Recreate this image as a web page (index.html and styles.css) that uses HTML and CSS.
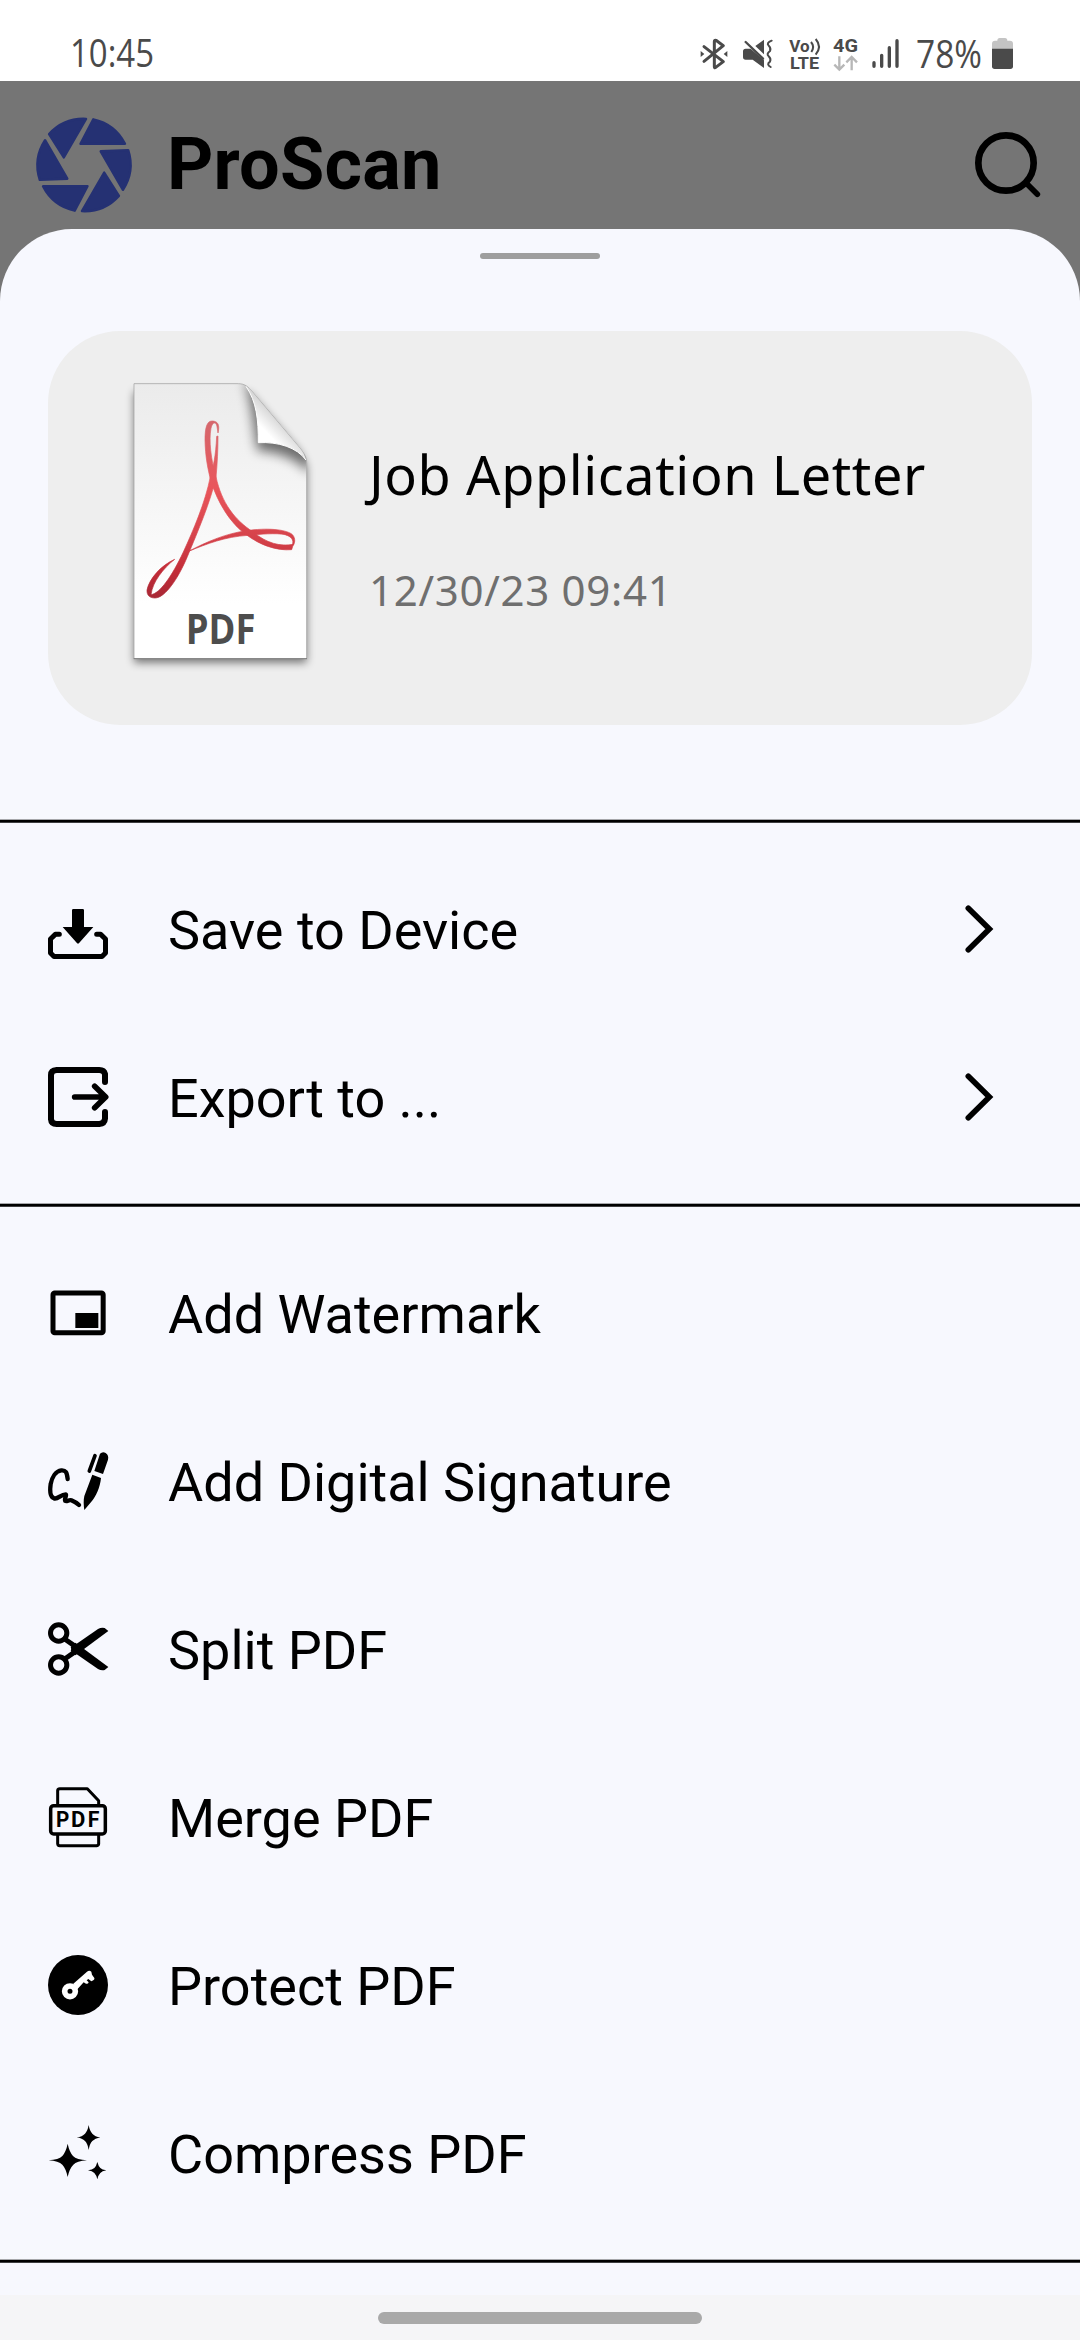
FILE: index.html
```html
<!DOCTYPE html>
<html lang="en">
<head>
<meta charset="utf-8">
<title>ProScan</title>
<link rel="stylesheet" href="styles.css">
</head>
<body>
<div class="phone">
  <div class="status">
    <svg class="clock" viewBox="0 0 88 56"><text x="1" y="41" textLength="84" lengthAdjust="spacingAndGlyphs">10:45</text></svg>
    <div class="indicators">
      <svg class="bluetooth" viewBox="120 108 84 105"><g fill="none" stroke="#4a4a4a" stroke-width="9" stroke-linejoin="round" stroke-linecap="round"><path d="M132 137L190 182L166 200Q163 201 163 196V122Q163 116 168 118L190 134L132 181"/></g><path d="M122 150L133 159L122 168ZM202 150L191 159L202 168Z" fill="#4a4a4a"/></svg>
      <svg class="mute" viewBox="246 108 96 105"><path fill="#4a4a4a" d="M286 135L312 116V160ZM257 143H272L312 178V201L278 176H257Q249 176 249 168V151Q249 143 257 143Z"/><g fill="none" stroke="#4a4a4a" stroke-linecap="round"><path stroke-width="7" d="M257 123L309 173"/><path stroke-width="6" d="M335 119Q318 126 326 134T330 150Q318 159 326 166T330 182Q318 190 332 198"/></g></svg>
      <svg class="volte" viewBox="387 93 96 135"><text x="388" y="152" textLength="61" lengthAdjust="spacingAndGlyphs">Vo</text><text x="390" y="204" textLength="87" lengthAdjust="spacingAndGlyphs">LTE</text><path fill="none" stroke="#4a4a4a" stroke-width="6" d="M453 123Q465 137 454 153M467 114Q487 137 467 161"/></svg>
      <svg class="network" viewBox="516 93 81 135"><text x="519" y="152" textLength="75" lengthAdjust="spacingAndGlyphs">4G</text><path fill="none" stroke="#b7b7b7" stroke-width="7" d="M538 166V205M523 191L538 206L553 191M575 208V170M559 184L575 168L591 184"/></svg>
      <svg class="signal" viewBox="633 108 87 105"><path stroke="#4a4a4a" stroke-width="10" stroke-linecap="round" d="M642 185V196M665 163V196M688 140V196M711 119V196"/></svg>
      <svg class="percent" viewBox="0 0 68 56"><text x="1" y="42" textLength="66" lengthAdjust="spacingAndGlyphs">78%</text></svg>
      <svg class="battery" viewBox="993 108 69 105"><path fill="#c4c4c4" d="M1012 119Q1012 111 1019 111H1035Q1042 111 1042 119H1050Q1059 119 1059 128V145H996V128Q996 119 1005 119Z"/><path fill="#4a4a4a" d="M996 143H1059V196Q1059 204 1051 204H1004Q996 204 996 196Z"/></svg>
    </div>
  </div>

  <header class="header">
    <svg class="logo" viewBox="-48 -48 96 96">
      <defs><path id="blade" d="M9.3 -45.7A46.7 46.7 0 0 1 41 -21.3L-3.5 -21.3Z"/></defs>
      <g fill="#253173" stroke="#253173" stroke-width="2.4" stroke-linejoin="round">
        <use href="#blade"/><use href="#blade" transform="rotate(60)"/><use href="#blade" transform="rotate(120)"/>
        <use href="#blade" transform="rotate(180)"/><use href="#blade" transform="rotate(240)"/><use href="#blade" transform="rotate(300)"/>
      </g>
    </svg>
    <h1 class="title">ProScan</h1>
    <svg class="search" viewBox="942 390 204 210"><g fill="none" stroke="#000" stroke-linecap="round"><circle cx="1038" cy="489" r="83" stroke-width="20"/><path stroke-width="17" d="M1099 550L1132 583"/></g></svg>
  </header>

  <main class="sheet">
    <div class="handle"></div>
    <section class="card">
      <svg class="file" viewBox="0 0 690 990">
        <defs>
          <linearGradient id="paper" x1="0" y1="0" x2="0" y2="1"><stop offset="0" stop-color="#ebebeb"/><stop offset=".4" stop-color="#f5f5f5"/><stop offset=".8" stop-color="#fff"/></linearGradient>
          <linearGradient id="ink" gradientUnits="userSpaceOnUse" x1="0" y1="183" x2="0" y2="714"><stop offset="0" stop-color="#d5686d"/><stop offset=".38" stop-color="#e9555b"/><stop offset=".65" stop-color="#d6434b"/><stop offset=".85" stop-color="#c22c38"/><stop offset="1" stop-color="#a82835"/></linearGradient>
          <linearGradient id="flap" gradientUnits="userSpaceOnUse" x1="445" y1="248" x2="515" y2="180"><stop offset="0" stop-color="#fff"/><stop offset=".4" stop-color="#fff"/><stop offset="1" stop-color="#d2d2d2"/></linearGradient>
          <filter id="soft" x="-20%" y="-20%" width="140%" height="140%"><feGaussianBlur stdDeviation="13"/></filter>
          <filter id="fold" x="-40%" y="-40%" width="180%" height="180%"><feGaussianBlur stdDeviation="17"/></filter>
          <clipPath id="edge"><path d="M72 71H385C405 71 416 82 425 93L570 265C583 281 590 292 590 310V896H72Z"/></clipPath>
        </defs>
        <path d="M72 95H385L420 100L570 275L590 318V908H72Z" fill="#000" opacity=".5" filter="url(#soft)"/>
        <path d="M72 71H385C405 71 416 82 425 93L570 265C583 281 590 292 590 310V896H72Z" fill="url(#paper)"/>
        <g clip-path="url(#edge)"><path d="M402 60C425 120 430 200 442 272C500 274 560 295 600 340L610 200Z" fill="#000" opacity=".55" filter="url(#fold)"/></g>
        <path d="M72 896V71H385C405 71 416 82 425 93L570 265C583 281 590 292 590 310V896" fill="none" stroke="#a9a9a9" stroke-width="2.5"/>
        <path d="M71 896H591" stroke="#777" stroke-width="3"/>
        <path d="M408 79C440 125 445 180 445 248C505 245 560 262 588 300C584 284 578 275 570 265L425 93Q416 83 408 79Z" fill="url(#flap)"/>
        <path d="M408 79C440 125 445 180 445 248C505 245 560 262 588 300" fill="none" stroke="#fff" stroke-width="3"/>
        <g fill="url(#ink)" stroke="url(#ink)" stroke-width="2">
          <path d="M320 229L324 228C324 270 322 310 318 352C300 430 265 510 232 590C205 655 165 714 135 714C118 714 110 705 111 690C118 655 155 615 194 598C160 625 128 665 123 704C150 700 185 650 220 576C250 510 285 430 301 350C310 320 317 290 320 229Z"/>
          <path d="M324 219C330 195 324 183 306 183C290 183 285 205 285 240C286 290 293 325 303 365C325 430 360 490 410 525C450 555 500 573 545 569L550 553C510 560 470 550 428 515C375 480 335 430 318 350C303 300 296 240 303 205C306 188 318 182 321 200Z"/>
          <path d="M238 573C290 552 345 530 415 526C445 523 500 518 525 524C545 530 552 540 547 555L550 556C557 545 555 530 545 522C525 508 470 503 410 512C350 520 290 545 238 573Z"/>
        </g>
        <text x="227" y="853" textLength="209" lengthAdjust="spacingAndGlyphs">PDF</text>
      </svg>
      <div class="meta">
        <div class="name">Job Application Letter</div>
        <div class="date">12/30/23 09:41</div>
      </div>
    </section>

    <div class="rule"></div>
    <nav class="group">
      <div class="row">
        <svg class="icon" viewBox="54 57 180 180"><path d="M126 91Q126 87 130 87H158Q162 87 162 91V141H190L148 188Q144 193 140 188L98 141H126Z"/><path fill="none" stroke="#000" stroke-width="15" stroke-linecap="round" stroke-linejoin="round" d="M88 163H76L61.500 177V219L72 229.500H216L226.500 219V177L212 163H200"/></svg>
        <span>Save to Device</span>
        <svg class="chevron" viewBox="192 372 90 150"><path d="M205 385L268 447L205 509"/></svg>
      </div>
      <div class="row">
        <svg class="icon" viewBox="54 561 180 180"><g fill="none" stroke="#000" stroke-width="18" stroke-linecap="round" stroke-linejoin="round"><path d="M225 606V582Q222 570 208 570H80Q63 571 63 585V718Q64 732 80 732H208Q224 731 225 716V696"/><path d="M134 651H224M194 619L227 651L194 683" stroke-width="17"/></g></svg>
        <span>Export to ...</span>
        <svg class="chevron" viewBox="192 372 90 150"><path d="M205 385L268 447L205 509"/></svg>
      </div>
    </nav>

    <div class="rule"></div>
    <nav class="group">
      <div class="row">
        <svg class="icon" viewBox="54 39 180 180"><rect x="69" y="69" width="150.500" height="119.500" rx="5" fill="none" stroke="#000" stroke-width="15"/><path d="M136 129H205V174H136Z"/></svg>
        <span>Add Watermark</span>
      </div>
      <div class="row">
        <svg class="icon" viewBox="54 543 180 180"><path fill="none" stroke="#000" stroke-width="13" stroke-linecap="round" stroke-linejoin="round" d="M113 627C111 606 107 600 94 601C77 603 66 622 62 642C59 663 59 680 72 685C84 689 92 673 107 673C112 676 101 687 106 693C111 696 117 688 124 691C131 694 141 699 147 705"/><path d="M210 551Q218 543 227 549Q237 556 234 569L219 612L193 603ZM187 614L213 624C211 650 197 682 184 695L163 720C161 706 160 690 163 678Z"/><path fill="none" stroke="#000" stroke-width="11" stroke-linecap="round" d="M195 557L178 603"/></svg>
        <span>Add Digital Signature</span>
      </div>
      <div class="row">
        <svg class="icon" viewBox="54 57 180 180"><g fill="none" stroke="#000" stroke-width="15"><circle cx="86" cy="99" r="24.500"/><circle cx="86" cy="195" r="24.500"/><path d="M104 117L150 149M104 177L150 145"/></g><path d="M126 141L204 87Q213 82 224 84L235 93L151 155L136 166L122 153Z"/><path d="M126 153L204 207Q213 212 224 210L235 201L151 139L136 128L122 141Z"/></svg>
        <span>Split PDF</span>
      </div>
      <div class="row">
        <svg class="icon" viewBox="54 561 180 180"><g fill="none" stroke="#000" stroke-width="9" stroke-linejoin="round"><path d="M83 617V571Q84 566 89 566H172L206 602V617M83 703V731Q84 737 89 737H200Q206 736 206 731V703"/><rect x="62" y="617" width="164" height="85" rx="9" stroke-width="10.500"/></g><g class="mini"><text x="78" y="682" textLength="40" lengthAdjust="spacingAndGlyphs">P</text><text x="123" y="682" textLength="43" lengthAdjust="spacingAndGlyphs">D</text><text x="173" y="682" textLength="35" lengthAdjust="spacingAndGlyphs">F</text></g></svg>
        <span>Merge PDF</span>
      </div>
      <div class="row">
        <svg class="icon" viewBox="54 75 180 180"><circle cx="144" cy="165" r="90"/><circle cx="120" cy="184" r="16" fill="none" stroke="#fff" stroke-width="17"/><path fill="#fff" d="M130 161L171 125Q178 119 184 125L186 134L193 144Q195 150 184 154L175 147L170 151L176 157Q174 163 168 161L161 157L142 178Z"/></svg>
        <span>Protect PDF</span>
      </div>
      <div class="row">
        <svg class="icon" viewBox="54 579 180 180"><path d="M113 641Q118 665 129 678Q140 689 171 691Q140 693 130 704Q118 716 113 741Q108 716 97 704Q86 693 56 691Q86 689 97 678Q108 665 113 641ZM176 585Q179 603 187 611Q195 620 211 622Q195 625 187 633Q179 641 176 660Q173 641 165 633Q157 625 140 622Q157 620 165 611Q173 603 176 585ZM202 696Q205 708 211 714Q216 720 229 721Q216 723 211 729Q205 735 202 748Q199 735 193 729Q187 723 174 721Q187 720 193 714Q199 708 202 696Z"/></svg>
        <span>Compress PDF</span>
      </div>
    </nav>
    <div class="rule"></div>
  </main>

  <div class="gesture"><div class="pill"></div></div>
</div>
</body>
</html>
```
FILE: styles.css
```css
* { box-sizing: border-box; }
body { margin: 0; }
svg { display: block; flex: none; overflow: visible; }

.phone {
  width: 1080px;
  height: 2340px;
  display: flex;
  flex-direction: column;
  overflow: hidden;
  background: #757575;
  font-family: Roboto, "Liberation Sans", sans-serif;
  color: #000;
}

.status {
  height: 81px;
  padding: 26px 66px 0 69px;
  display: flex;
  justify-content: space-between;
  align-items: flex-start;
  flex: none;
  background: #fff;
}
.status svg { height: 35px; }
.status text { fill: #4a4a4a; }
.status .clock { width: 88px; height: 56px; }
.clock text, .percent text { font-family: "Open Sans", sans-serif; font-size: 39px; }
.indicators { display: flex; align-items: center; }
.bluetooth { width: 28px; margin-right: 14px; }
.mute { width: 32px; margin-right: 15px; }
.status .volte { width: 32px; height: 45px; margin-right: 11px; }
.status .network { width: 27px; height: 45px; margin-right: 12px; }
.signal { width: 29px; margin-right: 15px; }
.status .percent { width: 68px; height: 56px; margin-right: 8px; }
.battery { width: 23px; }
.volte text { font-family: Roboto, sans-serif; font-size: 52px; font-weight: 700; }
.network text { font-family: Roboto, sans-serif; font-size: 57px; font-weight: 700; }

.header {
  height: 148px;
  padding: 20px 38px 0 36px;
  display: flex;
  align-items: center;
  flex: none;
}
.logo { width: 96px; height: 96px; }
.title { flex: 1; margin: 0 0 0 35px; font-size: 72px; line-height: 84px; font-weight: 700; letter-spacing: .2px; }
.search { width: 68px; height: 70px; }

.sheet {
  flex: 1;
  min-height: 0;
  overflow: hidden;
  border-radius: 72px 72px 0 0;
  background: #f7f8fe;
}
.handle { width: 120px; height: 6px; margin: 24px auto 72px; border-radius: 3px; background: #9e9e9e; }
.card {
  height: 394px;
  margin: 0 48px 94px;
  padding: 29px 0 0 62px;
  display: flex;
  border-radius: 72px;
  background: #eee;
}
.file { width: 230px; height: 330px; }
.file text { font-family: "Open Sans", sans-serif; font-size: 126px; font-weight: 700; fill: #4d4d4d; }
.meta { padding: 77px 0 0 29px; font-family: "Noto Sans", "Open Sans", sans-serif; white-space: nowrap; }
.name { font-size: 54px; line-height: 74px; letter-spacing: .6px; }
.date { margin-top: 50px; font-size: 42px; line-height: 58px; letter-spacing: .7px; color: #6f6f6f; }

.rule { height: 4px; background: linear-gradient(#a6a7ab 1px, #000 1px 3px, #3e3e40 3px); }
.group { padding: 22px 84px 22px 48px; }
.row { height: 168px; display: flex; align-items: center; }
.icon { width: 60px; height: 60px; }
.row span { flex: 1; margin-left: 60px; padding-top: 4px; font-size: 54px; line-height: 64px; }
.chevron { width: 30px; height: 50px; margin-right: 2px; }
.chevron path { fill: none; stroke: #000; stroke-width: 17px; stroke-linecap: round; }
.mini { font-family: Roboto, sans-serif; font-size: 65px; font-weight: 700; }

.gesture { height: 45px; padding-top: 17px; flex: none; background: #f5f5f7; }
.pill { width: 324px; height: 12px; margin: 0 auto; border-radius: 6px; background: #a9a9a9; }
```
